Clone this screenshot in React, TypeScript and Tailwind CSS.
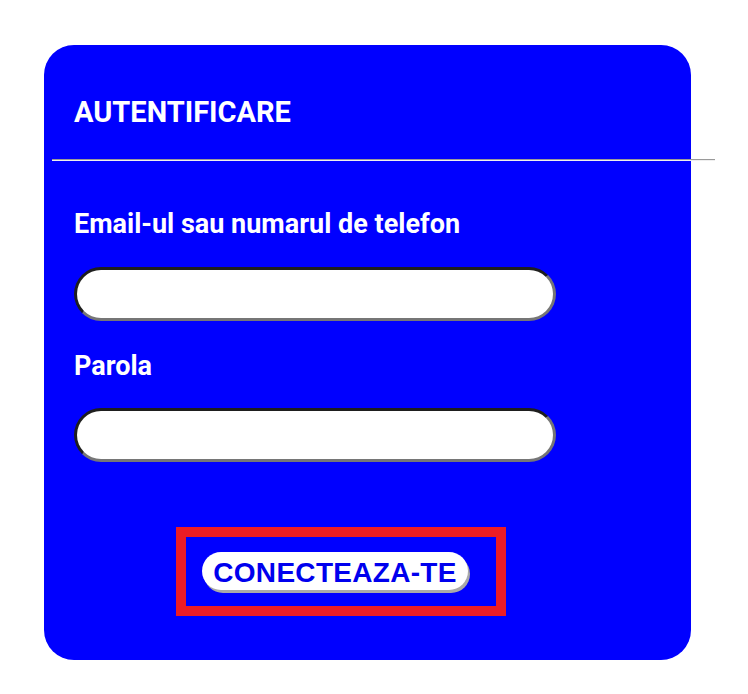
import React from "react";

const LoginCard: React.FC = () => {
  const [email, setEmail] = React.useState("");
  const [password, setPassword] = React.useState("");

  const inputStyle =
    "block w-[482px] h-[54px] rounded-full bg-white px-5 text-[16px] text-black outline-none border-[3px] border-t-[#1e1e1e] border-l-[#1e1e1e] border-b-[#767676] border-r-[#767676]";

  return (
    <div className="pt-[45px] pl-[44px]">
      <section className="w-[647px] h-[615px] rounded-[30px] bg-[#0000ff] px-2 text-white font-['Roboto',sans-serif]">
        <h2 className="pt-[51px] pl-[22px] text-[29px] leading-[32px] font-bold">
          AUTENTIFICARE
        </h2>
        <div className="mt-[31px] w-[663px] border-t border-b border-t-[#9a9a9a] border-b-[#eeeeee]" />

        <form className="pl-[22px]" onSubmit={(e) => e.preventDefault()}>
          <label
            htmlFor="email"
            className="block mt-[47px] text-[27px] leading-[32px] font-bold"
          >
            Email-ul sau numarul de telefon
          </label>
          <input
            id="email"
            type="text"
            value={email}
            onChange={(e) => setEmail(e.target.value)}
            className={`mt-[27px] ${inputStyle}`}
          />

          <label
            htmlFor="password"
            className="block mt-[29px] text-[27px] leading-[32px] font-bold"
          >
            Parola
          </label>
          <input
            id="password"
            type="password"
            value={password}
            onChange={(e) => setPassword(e.target.value)}
            className={`mt-[26px] ${inputStyle}`}
          />

          <div className="mt-[65px] ml-[102px] w-[330px] h-[89px] border-[10px] border-[#ed1c24] pl-[16px] pt-[15px]">
            <button
              type="submit"
              className="w-[266px] h-[38px] pt-[4px] rounded-full bg-white shadow-[2px_3px_0_0_#a9a9a9] text-[#0000ee] font-['Liberation_Sans',Arial,sans-serif] font-bold text-[28px] leading-[34px] tracking-[0.3px]"
            >
              CONECTEAZA-TE
            </button>
          </div>
        </form>
      </section>
    </div>
  );
};

export default function App() {
  return (
    <div className="min-h-screen bg-white">
      <LoginCard />
    </div>
  );
}
